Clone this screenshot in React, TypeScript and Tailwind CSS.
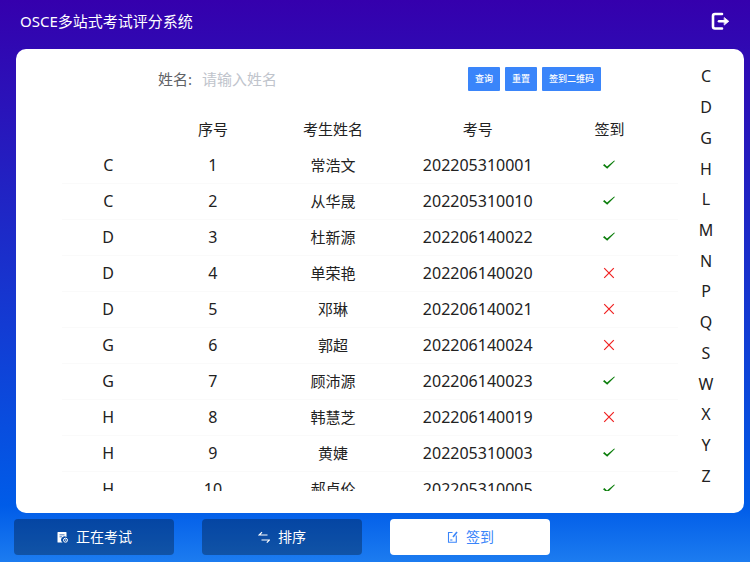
import { useState } from "react";

type Student = { letter: string; name: string; code: string; signed: boolean };

const students: Student[] = [
  { letter: "C", name: "常浩文", code: "202205310001", signed: true },
  { letter: "C", name: "从华晟", code: "202205310010", signed: true },
  { letter: "D", name: "杜新源", code: "202206140022", signed: true },
  { letter: "D", name: "单荣艳", code: "202206140020", signed: false },
  { letter: "D", name: "邓琳", code: "202206140021", signed: false },
  { letter: "G", name: "郭超", code: "202206140024", signed: false },
  { letter: "G", name: "顾沛源", code: "202206140023", signed: true },
  { letter: "H", name: "韩慧芝", code: "202206140019", signed: false },
  { letter: "H", name: "黄婕", code: "202205310003", signed: true },
  { letter: "H", name: "郝卓伦", code: "202205310005", signed: true },
];

const letters = ["C", "D", "G", "H", "L", "M", "N", "P", "Q", "S", "W", "X", "Y", "Z"];

function LogoutIcon() {
  return (
    <svg viewBox="0 0 20 20" className="w-5 h-5" fill="none" stroke="currentColor" strokeWidth="2.6" strokeLinecap="round">
      <path d="M12 2H5Q3 2 3 4V14.5Q3 16.5 5 16.5H12" />
      <path d="M9 9.3H15" />
      <path d="M14.5 5.8L18.8 9.3L14.5 12.8Z" fill="currentColor" strokeWidth="0.8" strokeLinejoin="round" />
    </svg>
  );
}

function ExamIcon() {
  return (
    <svg viewBox="0 0 12 12" className="w-3 h-3" fill="none">
      <path d="M2 1H10Q10.5 1 10.5 1.5V6A3.2 3.2 0 0 0 6.6 11.5H2Q1.5 11.5 1.5 11V1.5Q1.5 1 2 1Z" fill="currentColor" />
      <path d="M3.5 3.8H8.5M3.5 5.8H6" stroke="#0a46a0" strokeWidth="0.7" />
      <circle cx="9.5" cy="9.2" r="2" stroke="currentColor" strokeWidth="1" />
      <path d="M9.4 8.2V9.5H10.4" stroke="currentColor" strokeWidth="0.7" />
    </svg>
  );
}

function SortIcon() {
  return (
    <svg viewBox="0 0 12 12" className="w-3 h-3" fill="none" stroke="currentColor" strokeWidth="1.2">
      <path d="M4 1.2L1.2 4H9.5" />
      <path d="M8.8 11.6L11.5 9H3.5" />
    </svg>
  );
}

function SignIcon() {
  return (
    <svg viewBox="0 0 12 12" className="w-3 h-3" fill="none" stroke="currentColor" strokeWidth="1.1">
      <path d="M6.5 1.5H2.5V11.3H10.3V4.5" />
      <path d="M11 1L7 6" strokeWidth="1.6" />
      <path d="M4.2 9H6.4" />
    </svg>
  );
}

function SignMark({ signed }: { signed: boolean }) {
  if (signed) {
    return (
      <svg viewBox="0 0 14 14" role="img" aria-label="已签到" className="w-3.5 h-3.5 mx-auto text-[#0a7d0a]">
        <path d="M1 7.2L2.4 6L5 8.4L12.2 2.4L12.9 3.1L5.2 10.8Z" fill="currentColor" />
      </svg>
    );
  }
  return (
    <svg viewBox="0 0 14 14" role="img" aria-label="未签到" className="w-3.5 h-3.5 mx-auto text-[#f02020]" fill="none">
      <path d="M2.2 2.2L11.8 11.8M11.8 2.2L2.2 11.8" stroke="currentColor" strokeWidth="1.2" />
    </svg>
  );
}

const tabs = [
  { key: "exam", label: "正在考试", icon: <ExamIcon /> },
  { key: "sort", label: "排序", icon: <SortIcon /> },
  { key: "sign", label: "签到", icon: <SignIcon /> },
];

const actionClass =
  "h-6 px-[7px] rounded-[1px] bg-[#3a85fa] text-white text-[9px] font-medium whitespace-nowrap hover:bg-blue-600";

export default function App() {
  const [name, setName] = useState("");
  const [query, setQuery] = useState("");
  const [tab, setTab] = useState("sign");

  function handleSubmit(e: React.FormEvent) {
    e.preventDefault();
    setQuery(name);
  }

  function handleReset() {
    setName("");
    setQuery("");
  }

  function jumpTo(letter: string) {
    document.querySelector(`[data-letter="${letter}"]`)?.scrollIntoView();
  }

  const rows = students
    .map((s, i) => ({ ...s, index: i + 1 }))
    .filter((s) => s.name.includes(query));

  return (
    <div className="h-screen flex flex-col overflow-hidden bg-linear-to-b/srgb from-[#3500ad] via-[#005ce8] via-90% to-[#1c7cf0] font-['Noto_Sans','Noto_Sans_CJK_SC',sans-serif] text-[#222]">
      <header className="h-[49px] shrink-0 flex items-center justify-between px-5 pb-1.5 text-white">
        <h1 className="text-[15px]">OSCE多站式考试评分系统</h1>
        <button aria-label="退出">
          <LogoutIcon />
        </button>
      </header>

      <main className="flex-1 min-h-0 ml-4 mr-1.5 bg-white rounded-[10px] flex pt-3 pb-[22px]">
        <section className="flex-1 min-w-0 flex flex-col pl-11 pt-1">
          <form onSubmit={handleSubmit} className="flex items-center h-7 shrink-0 pl-[98px] pr-[77px]">
            <label htmlFor="name" className="text-[15px] text-[#606266] mr-2.5 whitespace-nowrap">
              姓名:
            </label>
            <input
              id="name"
              value={name}
              onChange={(e) => setName(e.target.value)}
              placeholder="请输入姓名"
              className="flex-1 min-w-0 text-[15px] outline-none placeholder:text-[#c0c4cc]"
            />
            <div className="flex gap-[5px]">
              <button className={actionClass}>查询</button>
              <button type="button" onClick={handleReset} className={actionClass}>
                重置
              </button>
              <button type="button" className={actionClass}>
                签到二维码
              </button>
            </div>
          </form>

          <div className="flex-1 min-h-0 mt-[19px] pl-0.5 overflow-y-auto [scrollbar-width:none]">
            <table className="w-full table-fixed text-base text-center">
              <colgroup>
                <col className="w-[15%]" />
                <col className="w-[19%]" />
                <col className="w-[20%]" />
                <col className="w-[27%]" />
                <col className="w-[19%]" />
              </colgroup>
              <thead>
                <tr className="h-[35px] text-[15px]">
                  <td />
                  <th className="font-normal">序号</th>
                  <th className="font-normal">考生姓名</th>
                  <th className="font-normal">考号</th>
                  <th className="font-normal pr-5">签到</th>
                </tr>
              </thead>
              <tbody>
                {rows.map((s) => (
                  <tr key={s.code} data-letter={s.letter} className="h-9 border-b border-[#fafafa]">
                    <td>{s.letter}</td>
                    <td>{s.index}</td>
                    <td className="text-[15px]">{s.name}</td>
                    <td>{s.code}</td>
                    <td className="pr-5">
                      <SignMark signed={s.signed} />
                    </td>
                  </tr>
                ))}
              </tbody>
            </table>
          </div>
        </section>

        <nav className="w-14 mr-2.5 shrink-0 flex flex-col items-center text-base">
          {letters.map((l) => (
            <button key={l} onClick={() => jumpTo(l)} className="flex-1 w-8 max-h-[31px]">
              {l}
            </button>
          ))}
        </nav>
      </main>

      <footer className="h-[49px] shrink-0 flex gap-7 pl-3.5 pt-1.5 pb-[7px]">
        {tabs.map((t) => (
          <button
            key={t.key}
            onClick={() => setTab(t.key)}
            className={`w-40 flex items-center justify-center gap-2 rounded text-sm ${
              tab === t.key ? "bg-white text-[#3a85fa]" : "bg-black/30 text-white"
            }`}
          >
            {t.icon}
            {t.label}
          </button>
        ))}
      </footer>
    </div>
  );
}
